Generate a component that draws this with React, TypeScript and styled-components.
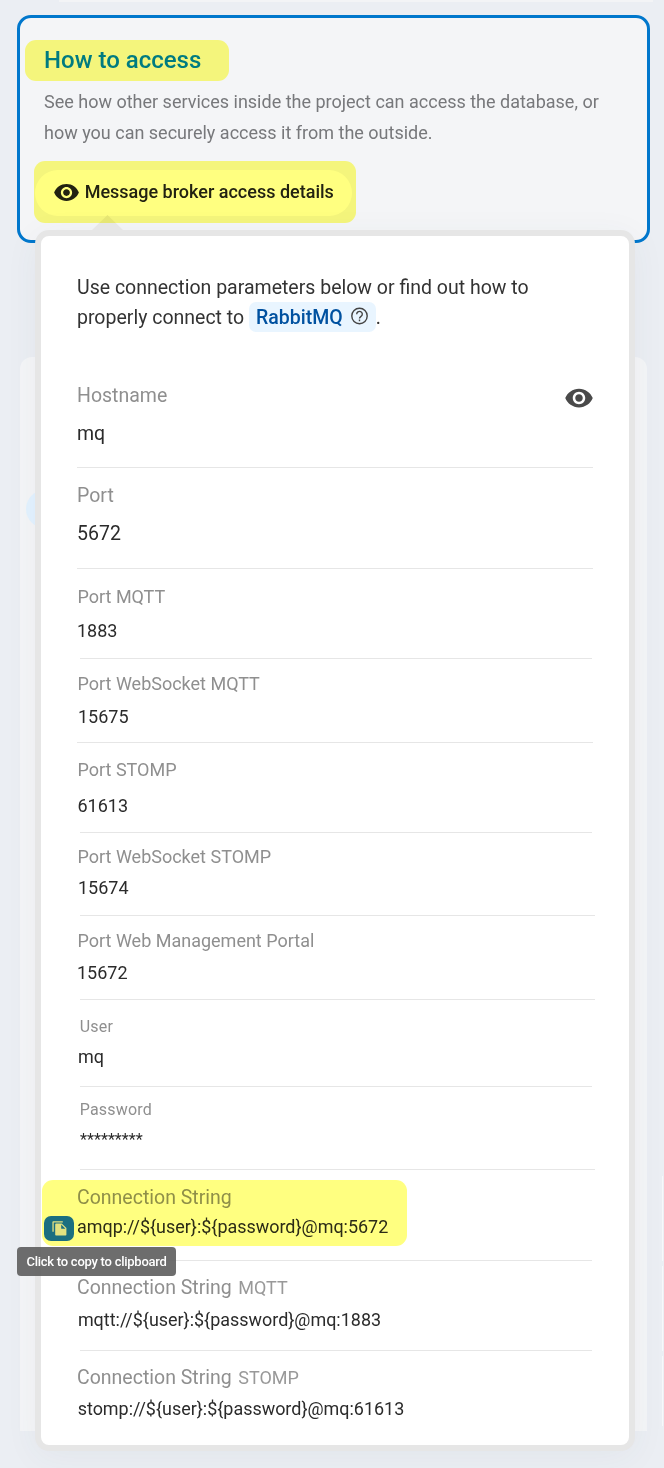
import React from 'react';
import styled, { createGlobalStyle } from 'styled-components';
import { MdVisibility } from 'react-icons/md';

const GlobalStyle = createGlobalStyle`
  * { box-sizing: border-box; }
  body { margin: 0; background: #ebeef3; font-family: Roboto, sans-serif; }
`;

const Page = styled.div`
  position: relative;
  width: 664px;
  height: 1468px;
  overflow: hidden;
  display: flex;
  flex-direction: column;
  background: #ebeef3;
`;

const PreviousCard = styled.div`
  height: 2px;
  margin: 0 11px 0 59px;
  background: #f3f4f6;
`;

const AccessCard = styled.section`
  width: 633px;
  height: 228px;
  margin: 13px 0 0 17px;
  padding: 22px 24px 0;
  border: 3px solid #0077cc;
  border-radius: 14px;
  background: #f4f5f7;
`;

const NextCard = styled.div`
  position: relative;
  width: 627px;
  height: 1074px;
  margin: 114px 0 0 20px;
  padding: 133px 0 0 6px;
  border-radius: 12px 12px 0 0;
  background: #f4f5f7;
`;

const NextCardPill = styled.div`
  width: 120px;
  height: 38px;
  border-radius: 19px;
  background: #e3f2ff;
`;

const SideCards = styled.div`
  position: absolute;
  right: 0;
  top: 1176px;
  display: flex;
  flex-direction: column;
  gap: 5px;
`;

const SideCard = styled.div<{ $height: number }>`
  width: 2px;
  height: ${(p) => p.$height}px;
  border-left: 1px solid #f7f8fa;
`;

const Mark = styled.span<{ $inset: string; $radius?: number }>`
  position: absolute;
  inset: ${(p) => p.$inset};
  z-index: 2;
  border-radius: ${(p) => p.$radius ?? 11}px;
  background: #ffff80;
  mix-blend-mode: multiply;
  pointer-events: none;
`;

const CardTitle = styled.h2`
  position: relative;
  width: fit-content;
  margin: 0;
  font-size: 24px;
  line-height: 40px;
  font-weight: 500;
  color: #007bff;
`;

const CardText = styled.p`
  margin: 6px 0 0;
  font-size: 18px;
  line-height: 31px;
  color: #77787b;
  white-space: nowrap;
`;

const AccessButton = styled.button`
  position: relative;
  display: flex;
  align-items: center;
  gap: 4.7px;
  width: 317px;
  height: 46px;
  margin: 22px 0 0 -9px;
  padding: 0 0 2px 18px;
  border: 0;
  border-radius: 23px;
  background: #fff;
  font: 500 18px/24px Roboto, sans-serif;
  color: #222;
  white-space: nowrap;
`;

const Popover = styled.div`
  position: absolute;
  z-index: 1;
  left: 35px;
  top: 230px;
  width: 600px;
  height: 1221px;
  border: 6px solid #e6e6e6;
  border-radius: 14px;
  background: #fff;
  box-shadow: 0 6px 34px rgba(60, 80, 100, 0.05);
  padding: 36px 34px 0 36px;
`;

const Arrow = styled.span`
  position: absolute;
  left: 51px;
  top: -21px;
  width: 31px;
  height: 15px;
  background: #e6e6e6;
  clip-path: polygon(50% 0, 100% 100%, 0 100%);
`;

const Intro = styled.p`
  margin: 0;
  height: 96px;
  padding-top: 1px;
  font-size: 19.5px;
  line-height: 30px;
  color: #333;
  white-space: nowrap;
`;

const DocLink = styled.a`
  display: inline-flex;
  align-items: center;
  gap: 7px;
  height: 30px;
  margin-top: -1px;
  padding: 2px 7px 0;
  border-radius: 7px;
  background: #e9f5ff;
  color: #0051a0;
  font-weight: 500;
  vertical-align: top;
`;

const HelpGlyph = styled.svg`
  width: 19px;
  height: 18px;
  margin-top: -4px;
  fill: none;
  stroke: #444;
  stroke-width: 1.4;
`;

type RowBox = { $height: number; $top: number; $gap: number; $left: number; $right: number };

const Row = styled.div<RowBox>`
  position: relative;
  display: flex;
  flex-direction: column;
  gap: ${(p) => p.$gap}px;
  height: ${(p) => p.$height}px;
  padding-top: ${(p) => p.$top}px;
  &:not(:last-child)::after {
    content: '';
    width: ${(p) => p.$right - p.$left}px;
    height: 1px;
    margin: auto 0 0 ${(p) => p.$left - 77}px;
    background: #e6e6e6;
  }
`;

const Line = styled.div<{ $size: number; $indent?: number; $spacing?: number }>`
  display: flex;
  align-items: baseline;
  height: 24px;
  padding-left: ${(p) => p.$indent ?? 0}px;
  font-size: ${(p) => p.$size}px;
  line-height: 24px;
  letter-spacing: ${(p) => p.$spacing ?? 0}px;
  white-space: pre;
`;

const Label = styled(Line)`
  color: #8f8f8f;
`;

const Value = styled(Line)`
  color: #2b2b2b;
`;

const Protocol = styled.span`
  margin-left: 6.5px;
  font-size: 18px;
  letter-spacing: 0;
  color: #999;
`;

const RevealButton = styled.button`
  position: absolute;
  right: 1px;
  top: 15px;
  padding: 0;
  border: 0;
  background: none;
  color: #4a4a4a;
  line-height: 0;
`;

const CopyButton = styled.button`
  position: absolute;
  left: -33px;
  top: 46px;
  display: grid;
  place-items: center;
  width: 30px;
  height: 25px;
  padding: 0;
  border: 0;
  border-radius: 7px;
  background: #1b6fff;
`;

const CopyGlyph = styled.svg`
  width: 15px;
  height: 15px;
  fill: #e2e2ff;
`;

const Tooltip = styled.div`
  position: absolute;
  z-index: 3;
  left: -60px;
  top: 77px;
  width: 159px;
  height: 29px;
  border-radius: 4px;
  background: rgba(97, 97, 97, 0.92);
  color: #fff;
  font-size: 13px;
  font-weight: 500;
  line-height: 29px;
  text-align: center;
  letter-spacing: -0.25px;
  white-space: nowrap;
`;

type Item = {
  label: string;
  protocol?: string;
  value: string;
  start: number;
  end: number;
  labelY: number;
  valueY: number;
  left?: number;
  right?: number;
  labelSize?: number;
  valueSize?: number;
  labelIndent?: number;
  valueIndent?: number;
  spacing?: number;
  reveal?: boolean;
  copy?: boolean;
};

const items: Item[] = [
  { label: 'Hostname', value: 'mq', start: 368, end: 468, labelY: 396, valueY: 434, left: 77, right: 593, labelSize: 19.5, valueSize: 19.5, labelIndent: 0, reveal: true },
  { label: 'Port', value: '5672', start: 468, end: 569, labelY: 496, valueY: 534, left: 77, right: 593, labelSize: 19.5, valueSize: 19.5, labelIndent: 0 },
  { label: 'Port MQTT', value: '1883', start: 569, end: 659, labelY: 597, valueY: 631, right: 592 },
  { label: 'Port WebSocket MQTT', value: '15675', start: 659, end: 743, labelY: 684, valueY: 717, left: 77, right: 593, valueIndent: 1 },
  { label: 'Port STOMP', value: '61613', start: 743, end: 833, labelY: 770, valueY: 806, right: 592, valueIndent: 0.5 },
  { label: 'Port WebSocket STOMP', value: '15674', start: 833, end: 916, labelY: 857, valueY: 888, valueIndent: 1 },
  { label: 'Port Web Management Portal', value: '15672', start: 916, end: 1000, labelY: 941, valueY: 973 },
  { label: 'User', value: 'mq', start: 1000, end: 1087, labelY: 1027, valueY: 1057, right: 592, labelSize: 16, labelIndent: 2.7, valueIndent: 1, spacing: 0.2 },
  { label: 'Password', value: '*********', start: 1087, end: 1170, labelY: 1110, valueY: 1140, labelSize: 16, valueSize: 16.2, labelIndent: 2.7, valueIndent: 3, spacing: 0.2 },
  { label: 'Connection String', value: 'amqp://${user}:${password}@mq:5672', start: 1170, end: 1261, labelY: 1198, valueY: 1227, right: 592, labelSize: 19.5, valueSize: 17.95, labelIndent: 0, copy: true },
  { label: 'Connection String', protocol: 'MQTT', value: 'mqtt://${user}:${password}@mq:1883', start: 1261, end: 1351, labelY: 1288, valueY: 1320, right: 592, labelSize: 19.5, valueSize: 17.95, labelIndent: 0, valueIndent: 0.9 },
  { label: 'Connection String', protocol: 'STOMP', value: 'stomp://${user}:${password}@mq:61613', start: 1351, end: 1441, labelY: 1378, valueY: 1409, labelSize: 19.5, valueSize: 17.95, labelIndent: 0, valueIndent: 0.7 },
];

function DetailRow({ item }: { item: Item }) {
  return (
    <Row
      $height={item.end - item.start}
      $top={item.labelY - 12 - item.start}
      $gap={item.valueY - item.labelY - 24}
      $left={item.left ?? 80}
      $right={item.right ?? 595}
    >
      <Label $size={item.labelSize ?? 18} $indent={item.labelIndent ?? 0.5} $spacing={item.spacing}>
        {item.label}
        {item.protocol && <Protocol>{item.protocol}</Protocol>}
      </Label>
      <Value $size={item.valueSize ?? 18} $indent={item.valueIndent}>{item.value}</Value>
      {item.reveal && (
        <RevealButton aria-label="Show values">
          <MdVisibility size={30} />
        </RevealButton>
      )}
      {item.copy && (
        <>
          <CopyButton aria-label="Copy">
            <CopyGlyph viewBox="0 0 15 15">
              <path d="M1.3 0.3H10.8V1.6H1.7V10.8H0.4V1.2Q0.4 0.3 1.3 0.3Z" />
              <path
                fillRule="evenodd"
                d="M4 2.6H9.8L14.4 7.1V13.8Q14.4 14.6 13.6 14.6H4Q3.2 14.6 3.2 13.8V3.4Q3.2 2.6 4 2.6ZM9.2 3.6V7.7H13.4Z"
              />
            </CopyGlyph>
          </CopyButton>
          <Tooltip>Click to copy to clipboard</Tooltip>
        </>
      )}
    </Row>
  );
}

export default function App() {
  return (
    <Page>
      <GlobalStyle />
      <PreviousCard />
      <AccessCard>
        <CardTitle>How to access</CardTitle>
        <CardText>
          See how other services inside the project can access the database, or
          <br />
          how you can securely access it from the outside.
        </CardText>
        <AccessButton>
          <MdVisibility size={27} />
          Message broker access details
        </AccessButton>
      </AccessCard>
      <NextCard>
        <NextCardPill />
      </NextCard>
      <SideCards>
        <SideCard $height={85} />
        <SideCard $height={85} />
        <SideCard $height={70} />
      </SideCards>
      <Popover>
        <Arrow />
        <Intro>
          Use connection parameters below or find out how to
          <br />
          properly connect to{' '}
          <DocLink>
            RabbitMQ
            <HelpGlyph viewBox="0 0 19 18">
              <circle cx="9.5" cy="9" r="7.7" />
              <path d="M6.7 7.2a2.8 2.7 0 1 1 4.7 1.9c-1 .9-1.9 1.3-1.9 2.5M9.5 12.6v1.6" />
            </HelpGlyph>
          </DocLink>
          .
        </Intro>
        {items.map((item) => (
          <DetailRow key={item.start} item={item} />
        ))}
      </Popover>
      <Mark $inset="40px 435px 1387px 25px" />
      <Mark $inset="161px 308px 1245px 34px" />
      <Mark $inset="1180px 257px 222px 42px" />
    </Page>
  );
}
